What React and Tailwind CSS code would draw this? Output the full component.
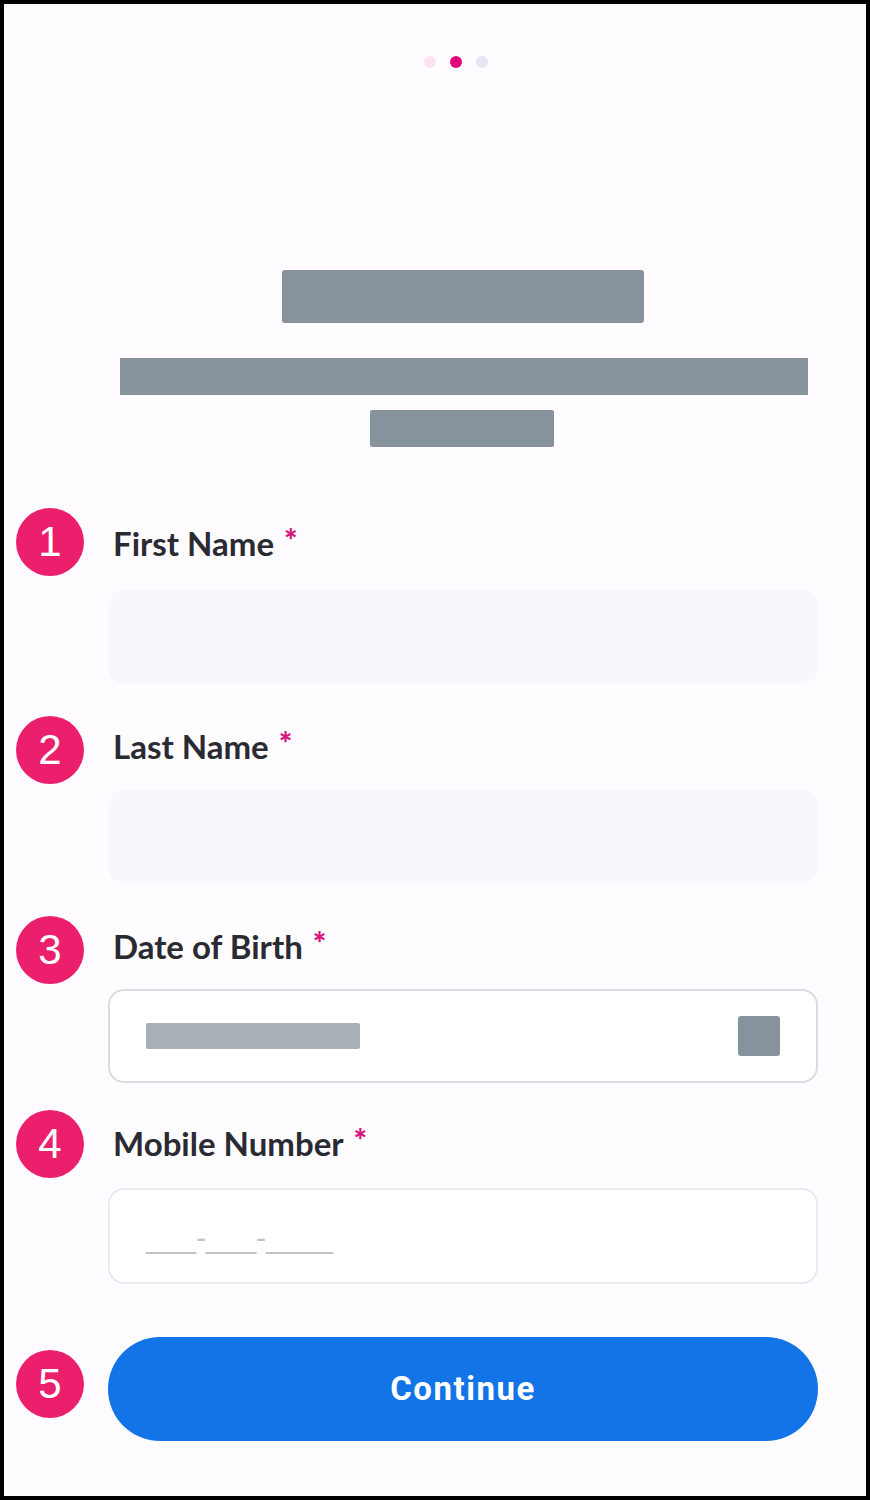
import React from "react";

const fields = [
  { n: 1, label: "First Name", kind: "filled", gapTop: "mt-[61px]", gapInput: "mt-[14px]", h: "h-[94px]", shift: "mt-[2px]" },
  { n: 2, label: "Last Name", kind: "filled", gapTop: "mt-[32px]", gapInput: "mt-[6px]", h: "h-[93px]", shift: "-mt-[8px]" },
  { n: 3, label: "Date of Birth", kind: "date", gapTop: "mt-[33px]", gapInput: "mt-[5px]", h: "h-[94px]", shift: "-mt-[8px]" },
  { n: 4, label: "Mobile Number", kind: "phone", gapTop: "mt-[27px]", gapInput: "mt-[10px]", h: "h-[96px]", shift: "-mt-[2px]" },
];

function StepBadge({ n }) {
  return (
    <div className="w-[68px] h-[68px] shrink-0 rounded-full bg-[#ec1f6c] flex items-center justify-center text-white text-[42px] leading-none font-['Liberation_Sans',Arial,sans-serif]">
      {n}
    </div>
  );
}

function FieldInput({ kind, h }) {
  if (kind === "date") {
    return (
      <div className={`${h} rounded-2xl border-2 border-[#dcdce0] bg-white flex items-center justify-between pl-[36px] pr-[36px]`}>
        <div className="w-[214px] h-[26px] bg-[#a9b0b5] rounded-[2px]" />
        <div className="w-[42px] h-[40px] bg-[#87939c] rounded-[3px]" />
      </div>
    );
  }
  if (kind === "phone") {
    return (
      <div className={`${h} rounded-2xl border-2 border-[#ebe9f2] bg-white flex items-center pl-[36px] pt-[2px]`}>
        <span className="text-[#c4c4c8] text-[30px] font-['Liberation_Sans',Arial,sans-serif]">
          ___-___-____
        </span>
      </div>
    );
  }
  return <div className={`${h} rounded-2xl bg-[#f8f7fd]`} />;
}

export default function App() {
  return (
    <div className="w-[870px] h-[1500px] border-4 border-black bg-[#fefcfe] flex flex-col font-['Lato','Noto_Sans',sans-serif]">
      {/* pager + heading placeholders */}
      <div className="pl-[104px] pr-[48px] flex flex-col items-center">
        <div className="mt-[52px] flex gap-[14px] pr-[14px]">
          <span className="w-3 h-3 rounded-full bg-[#fde3ef]" />
          <span className="w-3 h-3 rounded-full bg-[#e0087a]" />
          <span className="w-3 h-3 rounded-full bg-[#e8e6f4]" />
        </div>
        <div className="mt-[202px] w-[362px] h-[53px] bg-[#87939c] rounded-[3px]" />
        <div className="mt-[35px] w-[688px] h-[37px] bg-[#87939c] ml-[2px]" />
        <div className="mt-[15px] w-[184px] h-[37px] bg-[#87939c] rounded-[2px] -ml-[2px]" />
      </div>

      {/* form */}
      <div className="pl-3 pr-[48px] flex flex-col">
        {fields.map((f) => (
          <div key={f.n} className={`${f.gapTop} flex flex-col`}>
            <div className="flex items-center gap-[29px]">
              <StepBadge n={f.n} />
              <div className={`${f.shift} flex items-start text-[#2a2a33] text-[33px] font-bold leading-none`}>
                <span>{f.label}</span>
                <span className="ml-[10px] -mt-[3px] text-[#d6167b] text-[32px] font-black">*</span>
              </div>
            </div>
            <div className={`${f.gapInput} ml-[92px]`}>
              <FieldInput kind={f.kind} h={f.h} />
            </div>
          </div>
        ))}

        <div className="mt-[53px] flex items-center gap-[24px]">
          <div className="-mt-[10px]">
            <StepBadge n={5} />
          </div>
          <button className="flex-1 h-[104px] rounded-full bg-[#1374e8] text-white text-[33px] font-bold tracking-[1.5px] font-['Roboto',sans-serif]">
            Continue
          </button>
        </div>
      </div>
    </div>
  );
}
